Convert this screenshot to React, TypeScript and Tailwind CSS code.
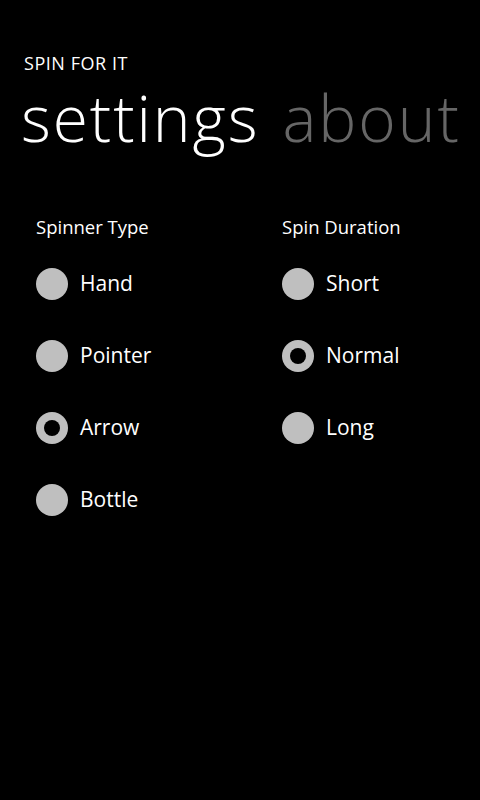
const font = { fontFamily: '"Open Sans", "Noto Sans", sans-serif' }

interface RadioProps { label: string; checked?: boolean }

function Radio({ label, checked }: RadioProps) {
  return (
    <div className="flex items-center h-[72px]">
      <span className="w-8 h-8 rounded-full bg-[#bfbfbf] flex items-center justify-center shrink-0">
        {checked && <span className="w-4 h-4 rounded-full bg-black" />}
      </span>
      <span className="ml-3 text-[21px] text-white">{label}</span>
    </div>
  )
}

export default function App() {
  return (
    <div className="w-[480px] h-[800px] bg-black text-white overflow-hidden" style={font}>
      <div className="pt-[51px] pl-6 text-[18px] tracking-[0.03em] leading-6">SPIN FOR IT</div>
      <div className="flex gap-[23px] pl-[21px] mt-[7px] text-[64px] tracking-[0.03em] font-light leading-[72px] whitespace-nowrap">
        <span className="text-white">settings</span>
        <span className="text-[#666666]">about</span>
      </div>
      <div className="flex px-9 mt-[61px]">
        <div className="w-[246px]">
          <div className="text-[18.5px] leading-6 mb-[9px]">Spinner Type</div>
          <Radio label="Hand" />
          <Radio label="Pointer" />
          <Radio label="Arrow" checked />
          <Radio label="Bottle" />
        </div>
        <div>
          <div className="text-[18.5px] leading-6 mb-[9px]">Spin Duration</div>
          <Radio label="Short" />
          <Radio label="Normal" checked />
          <Radio label="Long" />
        </div>
      </div>
    </div>
  )
}
